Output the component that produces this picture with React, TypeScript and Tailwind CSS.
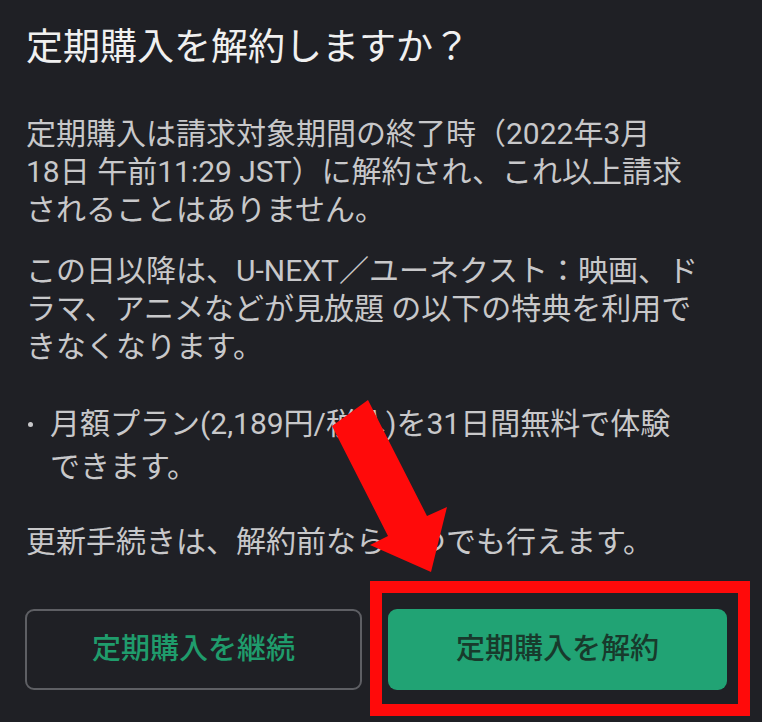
import React from 'react';

const BODY = 'text-[30px] leading-[38px] text-[#c8c8ca]';

export default function App() {
  return (
    <div
      className="relative w-[762px] h-[722px] overflow-hidden bg-[#1f2025]"
      style={{ fontFamily: 'Roboto, "Noto Sans CJK JP", sans-serif' }}
    >
      <div className="pl-[26px] pt-[24px]">
        <h1 className="text-[37px] leading-[48px] font-normal text-[#f0f0f0] whitespace-nowrap">
          定期購入を解約しますか？
        </h1>

        <p className={`mt-[43px] ${BODY} whitespace-nowrap`}>
          <span className="block">定期購入は請求対象期間の終了時（2022年3月</span>
          <span className="block">18日 午前11:29 JST）に解約され、これ以上請求</span>
          <span className="block">されることはありません。</span>
        </p>

        <p className={`mt-[23px] ${BODY} whitespace-nowrap`}>
          <span className="block">この日以降は、U-NEXT／ユーネクスト：映画、ド</span>
          <span className="block">ラマ、アニメなどが見放題 の以下の特典を利用で</span>
          <span className="block">きなくなります。</span>
        </p>

        <div className="mt-[36px] flex text-[30px] leading-[43px] text-[#c8c8ca] whitespace-nowrap">
          <span className="w-[24px] flex-none pt-[20px] pl-[2px]">
            <span className="block w-[5px] h-[5px] rounded-full bg-[#c8c8ca]" />
          </span>
          <div>
            <span className="block">月額プラン(2,189円/税込)を31日間無料で体験</span>
            <span className="block">できます。</span>
          </div>
        </div>

        <p className={`mt-[35px] ${BODY} whitespace-nowrap`}>
          更新手続きは、解約前ならいつでも行えます。
        </p>
      </div>

      <div className="mt-[48px] flex gap-[26px] pl-[25px]">
        <button
          type="button"
          className="w-[337px] h-[81px] rounded-[9px] border-2 border-[#5e5f64] text-[29px] font-medium text-[#1f9c6c]"
        >
          定期購入を継続
        </button>
        <div className="relative">
          <button
            type="button"
            className="w-[339px] h-[81px] rounded-[9px] bg-[#21a374] text-[29px] font-medium text-[#183a2c]"
          >
            定期購入を解約
          </button>
          <div className="pointer-events-none absolute -left-[18px] -top-[28px] -right-[23px] -bottom-[26px] border-[12px] border-[#ff0a0a]" />
        </div>
      </div>

      <svg
        className="pointer-events-none absolute left-0 top-0"
        width="762"
        height="722"
        viewBox="0 0 762 722"
      >
        <polygon
          points="332,426 368,400 427,516 447,507 431,572 370,545 388,536"
          fill="#ff0a0a"
        />
      </svg>
    </div>
  );
}
